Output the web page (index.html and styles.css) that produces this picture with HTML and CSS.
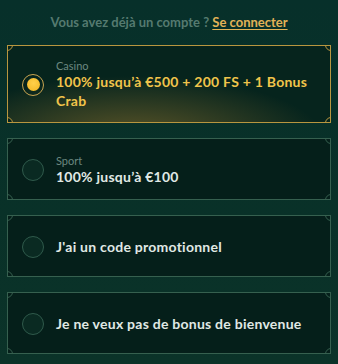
FILE: index.html
```html
<!DOCTYPE html>
<html lang="fr">
<head>
<meta charset="utf-8">
<link rel="stylesheet" href="styles.css">
</head>
<body>
<div class="page">
  <p class="login">Vous avez déjà un compte ? <a href="#" class="login-link">Se connecter</a></p>
  <div class="options">
    <label class="card card-active">
      <span class="c tl"></span><span class="c tr"></span><span class="c bl"></span><span class="c br"></span>
      <span class="radio radio-on"><span class="dot"></span></span>
      <span class="text">
        <span class="label">Casino</span>
        <span class="title title-gold">100% jusqu’à €500 + 200 FS + 1 Bonus Crab</span>
      </span>
    </label>
    <label class="card">
      <span class="c tl"></span><span class="c tr"></span><span class="c bl"></span><span class="c br"></span>
      <span class="radio"></span>
      <span class="text">
        <span class="label">Sport</span>
        <span class="title">100% jusqu’à €100</span>
      </span>
    </label>
    <label class="card">
      <span class="c tl"></span><span class="c tr"></span><span class="c bl"></span><span class="c br"></span>
      <span class="radio"></span>
      <span class="text">
        <span class="title">J'ai un code promotionnel</span>
      </span>
    </label>
    <label class="card">
      <span class="c tl"></span><span class="c tr"></span><span class="c bl"></span><span class="c br"></span>
      <span class="radio"></span>
      <span class="text">
        <span class="title">Je ne veux pas de bonus de bienvenue</span>
      </span>
    </label>
  </div>
</div>
</body>
</html>
```

FILE: styles.css
```css
html, body {
  margin: 0;
  padding: 0;
}
body {
  width: 338px;
  height: 364px;
  overflow: hidden;
  background: linear-gradient(180deg, #07302a 0%, #093128 60%, #0b3329 100%);
  font-family: Lato, "Liberation Sans", sans-serif;
}
.page {
  padding: 13px 7px 0;
}
.login {
  margin: 0 0 14px;
  text-align: center;
  font-size: 13px;
  line-height: 18px;
  font-weight: 700;
  color: #557a70;
}
.login-link {
  color: #e2b257;
  text-decoration: underline;
  text-underline-offset: 2px;
}
.options {
  display: flex;
  flex-direction: column;
  gap: 15px;
}
.card {
  position: relative;
  display: flex;
  align-items: center;
  gap: 12px;
  min-height: 62px;
  padding: 13px 14px 12px;
  box-sizing: border-box;
  border: 1px solid #36604f;
  background: #051f1a;
  overflow: hidden;
}
.card-active {
  border-color: #b8963f;
  background:
    radial-gradient(ellipse 190px 62px at 125px 92px, rgba(150, 118, 46, 0.6), rgba(150, 118, 46, 0) 100%),
    #06241d;
}
.c {
  position: absolute;
  width: 12px;
  height: 12px;
  box-sizing: border-box;
  border: 1px solid #36604f;
  border-radius: 50%;
  background: #051f1a;
}
.card-active .c {
  border-color: #b8963f;
  background: #06241d;
}
.tl { top: -7px; left: -7px; }
.tr { top: -7px; right: -7px; }
.bl { bottom: -7px; left: -7px; }
.br { bottom: -7px; right: -7px; }
.radio {
  flex: none;
  width: 22px;
  height: 22px;
  box-sizing: border-box;
  border-radius: 50%;
  border: 1px solid #2f5a4b;
  background: #0a2a22;
  display: flex;
  align-items: center;
  justify-content: center;
}
.radio-on {
  border-color: #c9a450;
  background: transparent;
}
.dot {
  width: 13px;
  height: 13px;
  border-radius: 50%;
  background: radial-gradient(circle at 50% 40%, #ffd04a, #f2b522);
}
.text {
  display: flex;
  flex-direction: column;
}
.label {
  font-size: 11px;
  line-height: 13px;
  color: #6b8880;
  font-weight: 400;
}
.title {
  font-size: 14px;
  line-height: 19px;
  font-weight: 700;
  color: #e0e9e5;
  letter-spacing: 0.25px;
}
.title-gold {
  color: #f1c44b;
}
```
